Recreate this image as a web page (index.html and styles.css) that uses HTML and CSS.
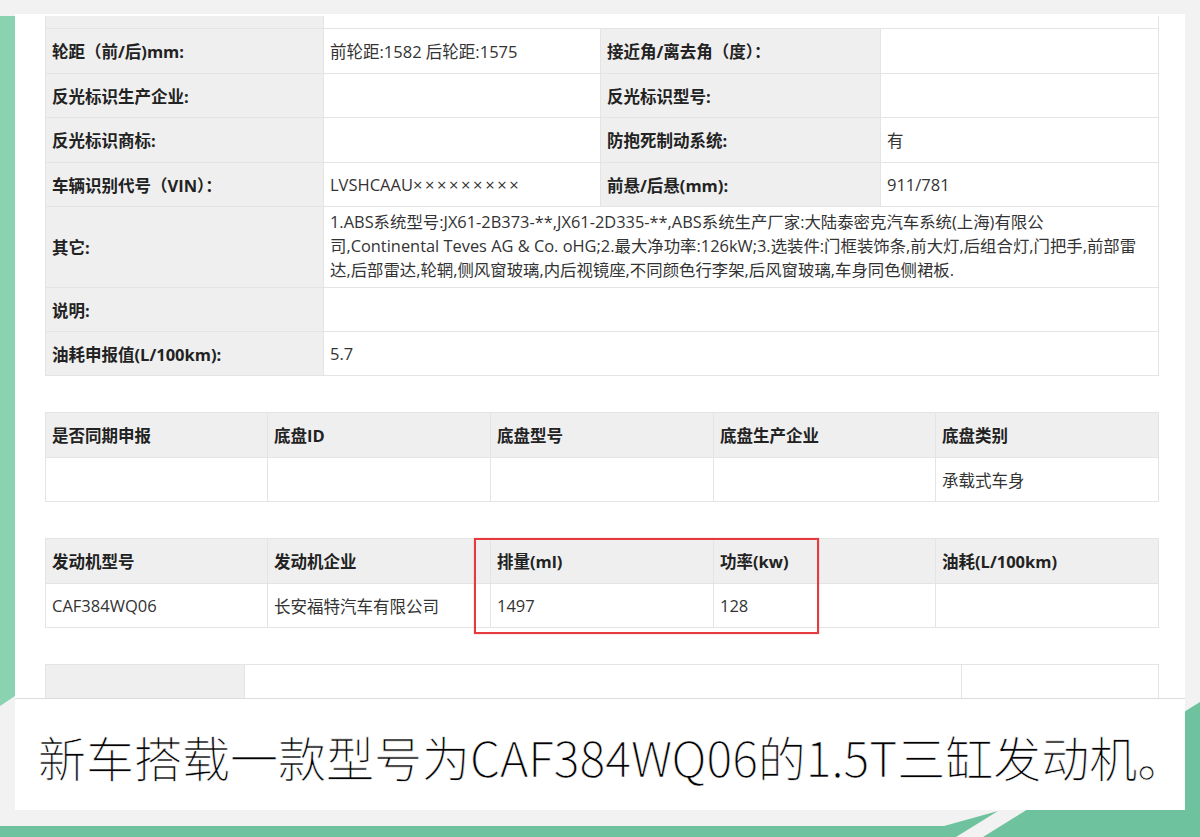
FILE: index.html
```html
<!DOCTYPE html>
<html lang="zh-CN">
<head>
<meta charset="utf-8">
<title>车型参数</title>
<link rel="stylesheet" href="styles.css">
</head>
<body>
<div class="page">
  <svg class="frame" width="1200" height="837" viewBox="0 0 1200 837" aria-hidden="true">
    <polygon class="g-light" points="0,16 15,16 15,696 0,706"/>
    <polygon class="g-dark" points="1200,702 1200,837 983,837"/>
    <polygon class="g-dark" points="0,826 944,826 998,811 956,837 0,837"/>
  </svg>

  <div class="card">
    <div class="viewport">
      <div class="spec">
        <div class="k cut"></div><div class="v cut span3"></div>

        <div class="k">轮距（前/后)mm:</div><div class="v">前轮距:1582 后轮距:1575</div>
        <div class="k">接近角/离去角（度）：</div><div class="v"></div>

        <div class="k">反光标识生产企业:</div><div class="v"></div>
        <div class="k">反光标识型号:</div><div class="v"></div>

        <div class="k">反光标识商标:</div><div class="v"></div>
        <div class="k">防抱死制动系统:</div><div class="v">有</div>

        <div class="k">车辆识别代号（VIN）：</div><div class="v">LVSHCAAU<span class="mask">×××××××××</span></div>
        <div class="k">前悬/后悬(mm):</div><div class="v">911/781</div>

        <div class="k">其它:</div>
        <div class="v span3 multi">1.ABS系统型号:JX61-2B373-**,JX61-2D335-**,ABS系统生产厂家:大陆泰密克汽车系统(上海)有限公<br>司,Continental Teves AG &amp; Co. oHG;2.最大净功率:126kW;3.选装件:门框装饰条,前大灯,后组合灯,门把手,前部雷<br>达,后部雷达,轮辋,侧风窗玻璃,内后视镜座,不同颜色行李架,后风窗玻璃,车身同色侧裙板.</div>

        <div class="k">说明:</div><div class="v span3"></div>

        <div class="k">油耗申报值(L/100km):</div><div class="v span3">5.7</div>
      </div>

      <div class="grid5">
        <div class="h">是否同期申报</div>
        <div class="h">底盘ID</div>
        <div class="h">底盘型号</div>
        <div class="h">底盘生产企业</div>
        <div class="h">底盘类别</div>
        <div class="d"></div>
        <div class="d"></div>
        <div class="d"></div>
        <div class="d"></div>
        <div class="d">承载式车身</div>
      </div>

      <div class="grid5 engine">
        <div class="h">发动机型号</div>
        <div class="h">发动机企业</div>
        <div class="h">排量(ml)</div>
        <div class="h">功率(kw)</div>
        <div class="h">油耗(L/100km)</div>
        <div class="d">CAF384WQ06</div>
        <div class="d">长安福特汽车有限公司</div>
        <div class="d">1497</div>
        <div class="d">128</div>
        <div class="d"></div>
        <div class="highlight"></div>
      </div>

      <div class="grid3">
        <div class="h"></div>
        <div class="d"></div>
        <div class="d"></div>
      </div>
    </div>

    <div class="caption">新车搭载一款型号为CAF384WQ06的1.5T三缸发动机。</div>
  </div>
</div>
</body>
</html>
```

FILE: styles.css
```css
* {
  box-sizing: border-box;
}

html, body {
  margin: 0;
  padding: 0;
  background: #f2f2f2;
}

body {
  font-family: "Open Sans", "Noto Sans CJK SC", "Microsoft YaHei", sans-serif;
  color: #333;
}

.page {
  position: relative;
  width: 1200px;
  height: 837px;
  overflow: hidden;
  background: #f2f2f2;
  padding: 14px 15px 0 15px;
}

.frame {
  position: absolute;
  left: 0;
  top: 0;
  z-index: 0;
}

.g-light { fill: #89d3b0; }
.g-dark { fill: #6fc29e; }

.card {
  position: relative;
  z-index: 1;
  width: 1170px;
  height: 796px;
  background: #fff;
  display: flex;
  flex-direction: column;
}

.viewport {
  flex: 1;
  overflow: hidden;
  padding: 2px 0 0 30px;
  display: flex;
  flex-direction: column;
  gap: 36px;
}

/* ---------- spec table ---------- */
.spec {
  display: grid;
  width: 1114px;
  grid-template-columns: 278px 277px 280px 278px;
  grid-template-rows: 13px 45px 44px 45px 44px 81px 44px 44px;
  border-left: 1px solid #e4e4e4;
}

.spec > div,
.grid5 > div:not(.highlight),
.grid3 > div {
  display: flex;
  align-items: center;
  padding: 0 6px;
  border-right: 1px solid #e4e4e4;
  border-bottom: 1px solid #e4e4e4;
  font-size: 16.5px;
  white-space: nowrap;
}

.spec .k {
  background: #efefef;
  font-weight: 700;
  color: #222;
}

.spec .v {
  background: #fff;
  color: #333;
}

.spec .mask {
  letter-spacing: 2.6px;
}

.spec .span3 {
  grid-column: span 3;
}

.spec .multi {
  line-height: 24px;
  padding-bottom: 2px;
  font-size: 16.4px;
}

/* ---------- 5 column tables ---------- */
.grid5 {
  position: relative;
  display: grid;
  width: 1114px;
  grid-template-columns: 222px 223px 223px 222px 223px;
  grid-template-rows: 45px 44px;
  border-left: 1px solid #e4e4e4;
  border-top: 1px solid #e4e4e4;
}

.grid5 .h,
.grid3 .h {
  background: #efefef;
  font-weight: 700;
  color: #222;
}

.grid5 .d,
.grid3 .d {
  background: #fff;
  color: #333;
}

.highlight {
  position: absolute;
  left: 428px;
  top: -1px;
  width: 345px;
  height: 96px;
  border: 2px solid #e63a3e;
  box-shadow: 0 0 1px rgba(230, 58, 62, 0.6);
  pointer-events: none;
}

/* ---------- cut-off last table ---------- */
.grid3 {
  display: grid;
  width: 1114px;
  grid-template-columns: 199px 717px 197px;
  grid-template-rows: 45px;
  border-left: 1px solid #e4e4e4;
  border-top: 1px solid #e4e4e4;
}

/* ---------- caption ---------- */
.caption {
  height: 112px;
  flex: none;
  border-top: 1px solid #dcdcdc;
  background: #fff;
  padding: 2px 0 0 23px;
  display: flex;
  align-items: center;
  font-family: "Noto Sans CJK SC Light", "Noto Sans CJK SC", sans-serif;
  font-size: 48px;
  font-weight: 300;
  color: #000;
  white-space: nowrap;
  -webkit-text-stroke: 0.6px #fff;
}
```
